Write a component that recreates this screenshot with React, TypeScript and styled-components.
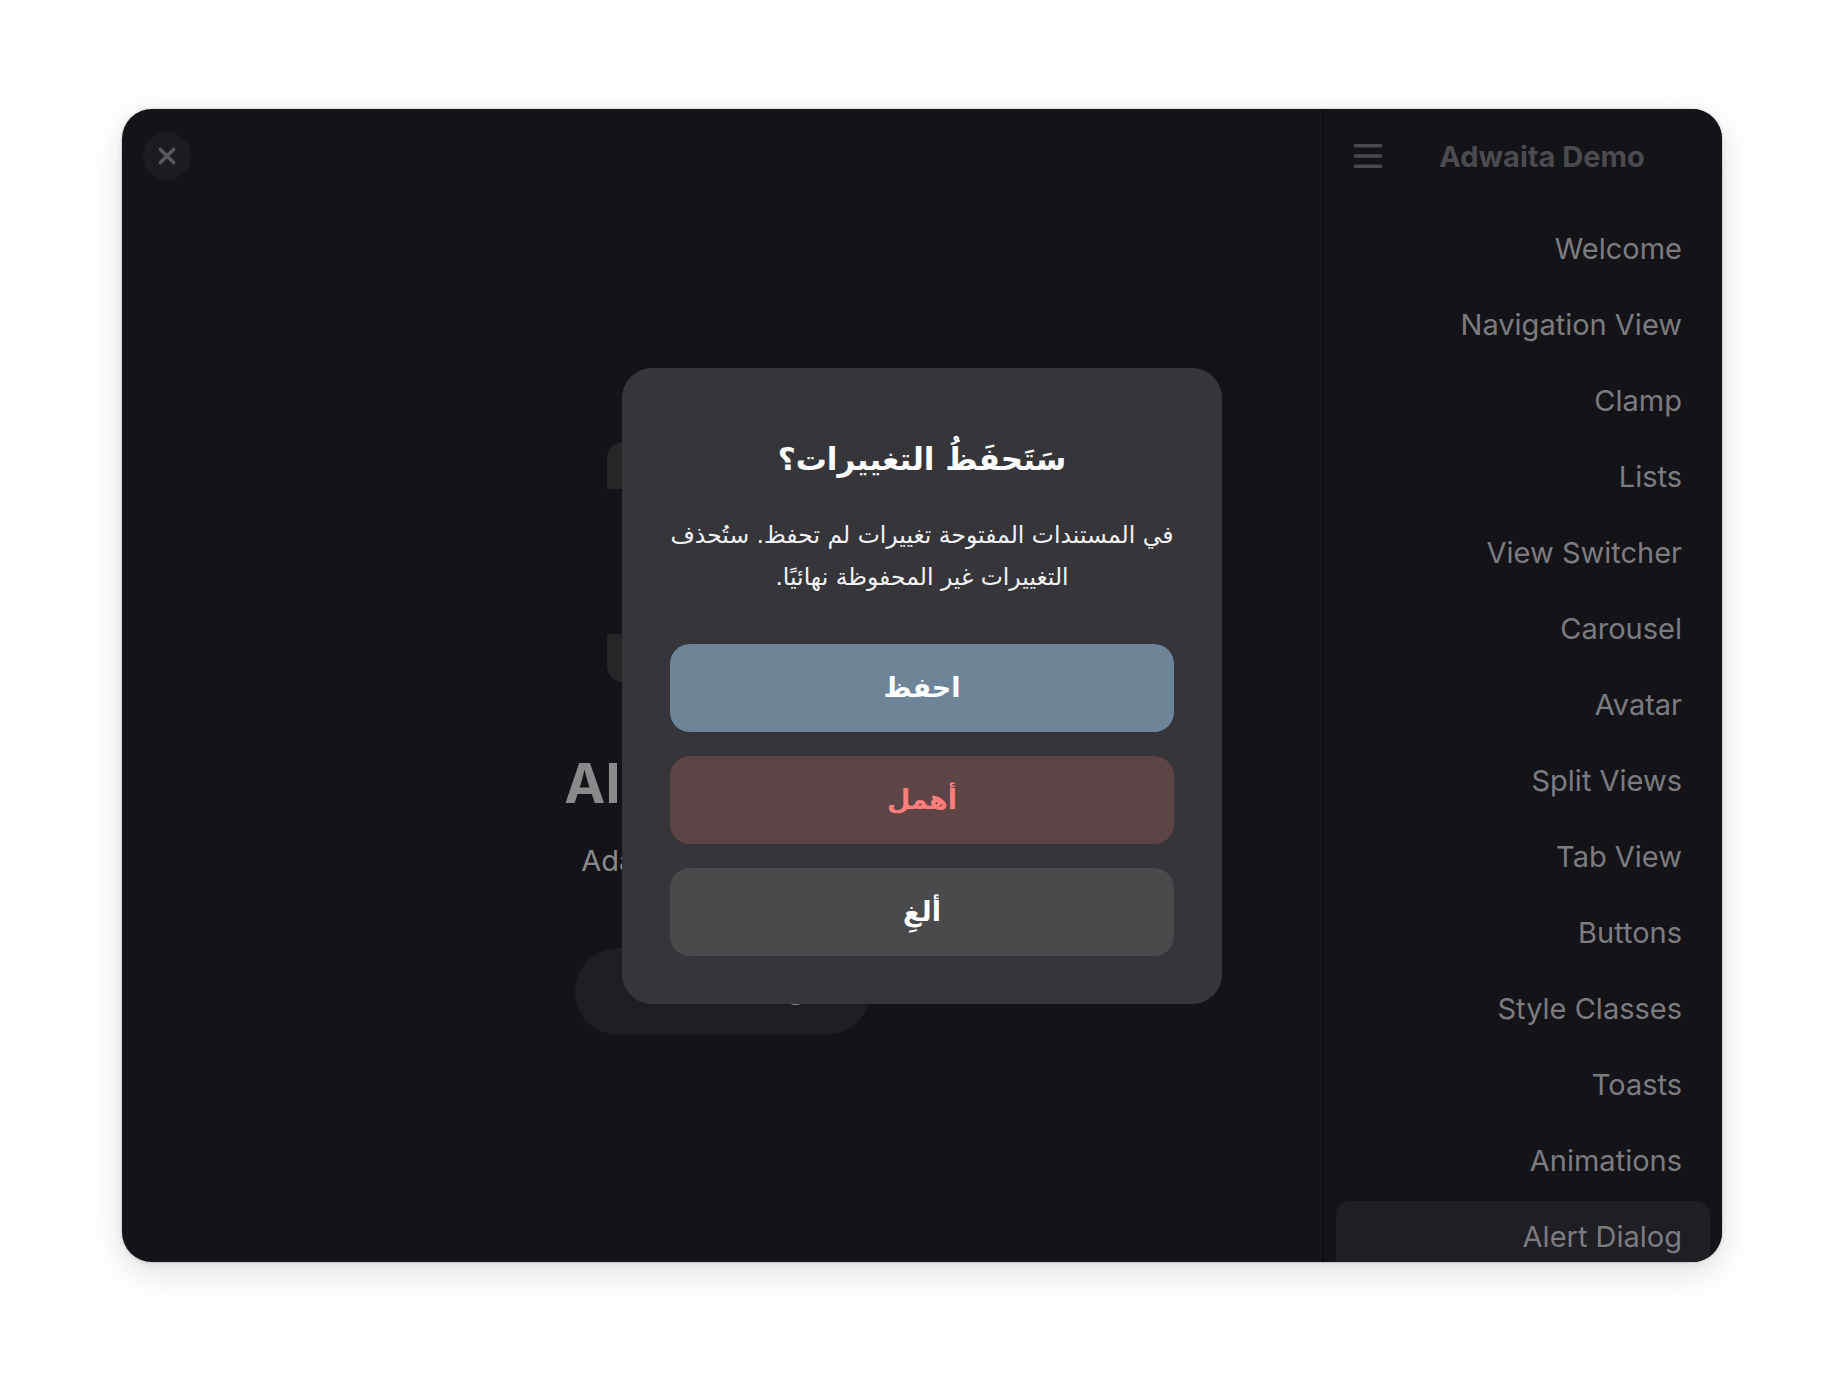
import styled, { createGlobalStyle } from 'styled-components'

const pages = [
    'Welcome',
    'Navigation View',
    'Clamp',
    'Lists',
    'View Switcher',
    'Carousel',
    'Avatar',
    'Split Views',
    'Tab View',
    'Buttons',
    'Style Classes',
    'Toasts',
    'Animations',
    'Alert Dialog',
]

const App = () => {
    return (
        <>
            <GlobalStyle />
            <Desktop>
                <Window>
                    <ContentPane>
                        <ContentHeader>
                            <CloseButton aria-label="Close">
                                <svg width="18" height="18" viewBox="0 0 18 18">
                                    <path
                                        d="M2.5 2.5 L15.5 15.5 M15.5 2.5 L2.5 15.5"
                                        stroke="currentColor"
                                        strokeWidth="3.6"
                                        strokeLinecap="round"
                                    />
                                </svg>
                            </CloseButton>
                        </ContentHeader>
                        <StatusPage>
                            <StatusIcon viewBox="0 0 256 256">
                                <path d="M13 55 V24 a16 16 0 0 1 16 -16 H227 a16 16 0 0 1 16 16 V55 Z" />
                                <rect x="30" y="55" width="196" height="145" />
                                <path d="M13 200 H243 V232 a16 16 0 0 1 -16 16 H29 a16 16 0 0 1 -16 -16 Z" />
                            </StatusIcon>
                            <StatusTitle>Alert Dialog</StatusTitle>
                            <StatusDescription>Adaptive alert dialog</StatusDescription>
                            <PillButton>Alert Dialog</PillButton>
                        </StatusPage>
                    </ContentPane>

                    <Sidebar>
                        <SidebarHeader>
                            <MenuIcon width="28" height="26" viewBox="0 0 28 26">
                                <rect x="0" y="1" width="28" height="3.4" rx="1" />
                                <rect x="0" y="11.3" width="28" height="3.4" rx="1" />
                                <rect x="0" y="21.6" width="28" height="3.4" rx="1" />
                            </MenuIcon>
                            <SidebarTitle>Adwaita Demo</SidebarTitle>
                        </SidebarHeader>
                        <PageList>
                            {pages.map((page) => (
                                <PageRow
                                    key={page}
                                    $selected={page === 'Alert Dialog'}
                                >
                                    {page}
                                </PageRow>
                            ))}
                        </PageList>
                    </Sidebar>

                    <Overlay>
                        <Dialog dir="rtl" lang="ar">
                            <DialogHeading>سَتَحفَظُ التغييرات؟</DialogHeading>
                            <DialogBody>
                                في المستندات المفتوحة تغييرات لم تحفظ. ستُحذف
                                <br />
                                التغييرات غير المحفوظة نهائيًا.
                            </DialogBody>
                            <DialogActions>
                                <DialogButton $kind="suggested">احفظ</DialogButton>
                                <DialogButton $kind="destructive">أهمل</DialogButton>
                                <DialogButton $kind="plain">ألغِ</DialogButton>
                            </DialogActions>
                        </Dialog>
                    </Overlay>
                </Window>
            </Desktop>
        </>
    )
}

export default App

const GlobalStyle = createGlobalStyle`
    html,
    body {
        margin: 0;
        padding: 0;
        background: #ffffff;
    }

    * {
        box-sizing: border-box;
    }

    body {
        font-family: Inter, "Noto Sans", "DejaVu Sans", sans-serif;
    }
`

export const Desktop = styled.div`
    width: 1844px;
    height: 1396px;
    padding-top: 109px;

    display: flex;
    justify-content: center;
    align-items: flex-start;
`

export const Window = styled.div`
    position: relative;

    width: 1600px;
    height: 1153px;

    display: flex;

    border-radius: 30px;
    overflow: hidden;

    background: #141418;
    box-shadow:
        0 0 0 1px rgba(0, 0, 0, 0.08),
        0 10px 36px rgba(0, 0, 0, 0.13),
        0 2px 6px rgba(0, 0, 0, 0.08);
`

export const ContentPane = styled.section`
    width: 1200px;
    height: 100%;

    display: flex;
    flex-direction: column;
`

export const ContentHeader = styled.header`
    height: 94px;
    flex-shrink: 0;

    display: flex;
    align-items: center;

    padding-left: 21px;
`

export const CloseButton = styled.button`
    width: 48px;
    height: 48px;

    display: flex;
    align-items: center;
    justify-content: center;

    padding: 0;
    border: none;
    border-radius: 50%;

    background: #1c1c20;
    color: #58585c;
`

export const StatusPage = styled.div`
    flex: 1;

    display: flex;
    flex-direction: column;
    align-items: center;
    justify-content: center;

    padding-top: 4px;
`

export const StatusIcon = styled.svg`
    width: 256px;
    height: 256px;
    margin-bottom: 60px;

    fill: #262629;
`

export const StatusTitle = styled.h1`
    margin: 0;

    font-size: 55px;
    font-weight: 700;
    line-height: 67px;

    color: #8a8a8d;
`

export const StatusDescription = styled.p`
    margin: 22px 0 0;

    font-size: 29px;
    line-height: 43px;

    color: #89898c;
`

export const PillButton = styled.button`
    margin-top: 66px;

    width: 295px;
    height: 87px;
    padding-bottom: 8px;

    border: none;
    border-radius: 44px;

    background: #1e1e22;
    color: #8a8a8d;

    font-family: Inter, sans-serif;
    font-size: 29px;
    font-weight: 700;
`

export const Sidebar = styled.aside`
    width: 400px;
    height: 100%;

    display: flex;
    flex-direction: column;

    border-left: 2px solid #0e0e11;
    background: #141418;
`

export const SidebarHeader = styled.header`
    height: 94px;
    flex-shrink: 0;

    display: flex;
    align-items: center;

    padding-left: 30px;
    padding-right: 20px;
`

export const MenuIcon = styled.svg`
    flex-shrink: 0;
    fill: #4a4a4e;
`

export const SidebarTitle = styled.h2`
    flex: 1;
    margin: 0;

    text-align: center;

    font-size: 29px;
    font-weight: 700;

    color: #4b4b4f;
`

export const PageList = styled.nav`
    flex: 1;

    display: flex;
    flex-direction: column;

    padding-top: 7px;
    overflow: hidden;
`

export const PageRow = styled.div<{ $selected?: boolean }>`
    flex-shrink: 0;

    height: 70px;
    margin: 3px 12px;
    padding: 0 28px;

    display: flex;
    align-items: center;
    justify-content: flex-end;

    border-radius: 14px;
    background: ${({ $selected }) => ($selected ? '#1f1f23' : 'transparent')};

    font-size: 29px;
    color: #7c7c80;
`

export const Overlay = styled.div`
    position: absolute;
    inset: 0;

    display: flex;
    align-items: center;
    justify-content: center;
`

export const Dialog = styled.div`
    width: 600px;

    display: flex;
    flex-direction: column;
    align-items: stretch;

    padding: 68px 48px 48px;

    border-radius: 30px;
    background: #36363a;

    font-family: "DejaVu Sans", sans-serif;
    text-align: center;
`

export const DialogHeading = styled.h2`
    margin: 0;

    font-size: 31px;
    font-weight: 700;
    line-height: 46px;

    color: #ffffff;
`

export const DialogBody = styled.p`
    margin: 32px 0 0;

    font-size: 23.5px;
    line-height: 42px;
    white-space: nowrap;

    color: #f2f2f2;
`

export const DialogActions = styled.div`
    margin-top: 46px;

    display: flex;
    flex-direction: column;
    gap: 24px;
`

const buttonColors = {
    suggested: { bg: '#6e8599', fg: '#ffffff' },
    destructive: { bg: '#5c4447', fg: '#ff7e7b' },
    plain: { bg: '#4a4a4d', fg: '#ffffff' },
}

export const DialogButton = styled.button<{ $kind: keyof typeof buttonColors }>`
    height: 88px;

    border: none;
    border-radius: 20px;

    background: ${({ $kind }) => buttonColors[$kind].bg};
    color: ${({ $kind }) => buttonColors[$kind].fg};

    font-family: "DejaVu Sans", sans-serif;
    font-size: 27px;
    font-weight: 700;
`
